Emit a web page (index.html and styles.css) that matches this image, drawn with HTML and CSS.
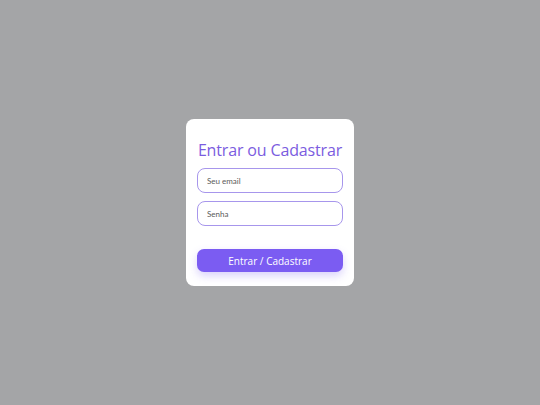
FILE: index.html
```html
<!DOCTYPE html>
<html lang="pt-BR">
<head>
<meta charset="utf-8">
<title>Entrar ou Cadastrar</title>
<link rel="stylesheet" href="styles.css">
</head>
<body>
  <main class="card">
    <h1 class="title">Entrar ou Cadastrar</h1>
    <form class="form">
      <input class="field" type="email" placeholder="Seu email">
      <input class="field" type="password" placeholder="Senha">
      <button class="submit" type="button">Entrar / Cadastrar</button>
    </form>
  </main>
</body>
</html>
```
FILE: styles.css
```css
* { box-sizing: border-box; }
html, body { height: 100%; }
body {
  margin: 0;
  background: #a4a5a7;
  display: flex;
  align-items: center;
  justify-content: center;
  font-family: "Open Sans", "DejaVu Sans", sans-serif;
}
.card {
  width: 168px;
  height: 167px;
  background: #ffffff;
  border-radius: 8px;
  padding: 20px 11px 14px 11px;
  display: flex;
  flex-direction: column;
}
.title {
  margin: 0;
  text-align: center;
  font-size: 16px;
  font-weight: 500;
  line-height: 22px;
  color: #7b5ce0;
  letter-spacing: -0.15px;
}
.form {
  margin-top: 7px;
  display: flex;
  flex-direction: column;
  gap: 8px;
}
.field {
  width: 146px;
  height: 25px;
  border: 1px solid #a796ec;
  border-radius: 8px;
  padding: 0 9px;
  font-family: "Lato", "Noto Sans", sans-serif;
  font-size: 8px;
  color: #555;
  background: #fff;
  outline: none;
}
.field::placeholder { color: #5a5a5a; }
.submit {
  margin-top: 15px;
  width: 146px;
  height: 23px;
  border: none;
  border-radius: 7px;
  background: #7b5cf2;
  color: #ffffff;
  font-family: "Open Sans", "DejaVu Sans", sans-serif;
  font-size: 10px;
  font-weight: 500;
  box-shadow: 0 4px 8px rgba(123, 92, 242, 0.28);
  cursor: pointer;
}
```
